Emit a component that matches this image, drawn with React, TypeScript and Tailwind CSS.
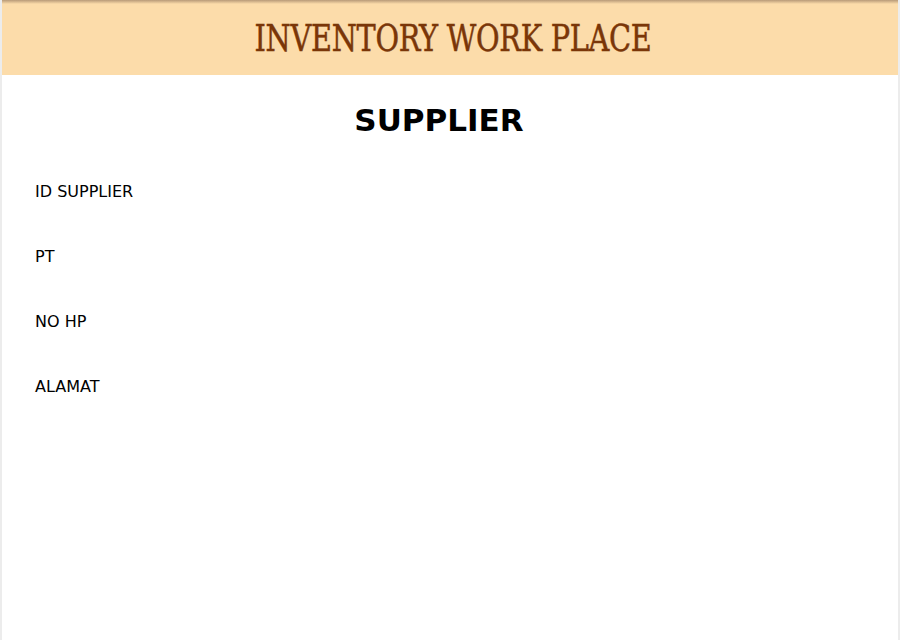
export default function App() {
  return (
    <div className="w-[900px] h-[640px] bg-white relative overflow-hidden border-x-2 border-[#ececec] font-['DejaVu_Sans',Verdana,sans-serif]">
      <div className="absolute inset-x-0 top-0 h-[4px] bg-gradient-to-b from-[#b89a78] to-transparent" />
      <div className="h-[75px] bg-[#fcdcaa] flex items-center justify-center pl-[6px]">
        <h1 className="text-[32px] leading-[40px] font-normal text-[#7a3608] scale-y-[1.18] tracking-[-0.3px] [-webkit-text-stroke:0.4px] font-['DejaVu_Serif_Condensed','DejaVu_Serif',serif]">INVENTORY WORK PLACE</h1>
      </div>
      <h2 className="text-center font-bold text-[31px] text-black mt-[27px] leading-[36px] pr-[22px]">SUPPLIER</h2>
      <div className="pl-[33px] mt-[44px] flex flex-col gap-[45px] text-[16px] text-black leading-[20px]">
        <div>ID SUPPLIER</div>
        <div>PT</div>
        <div>NO HP</div>
        <div>ALAMAT</div>
      </div>
    </div>
  );
}
